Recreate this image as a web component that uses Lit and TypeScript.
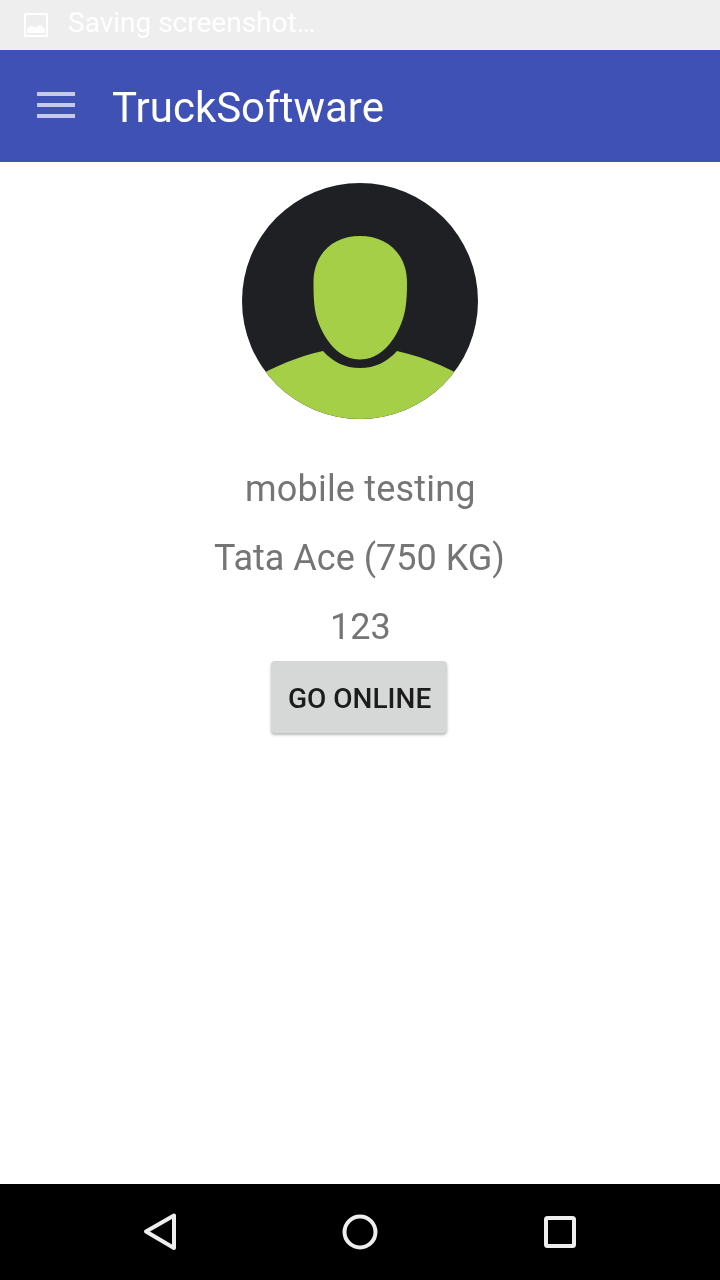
import { LitElement, html, css } from "lit";
import { customElement } from "lit/decorators.js";

@customElement("app-root")
export class AppRoot extends LitElement {
  static styles = css`
    :host { display: block; width: 720px; height: 1280px; font-family: Roboto, "Liberation Sans", sans-serif; background: #fff; }
    .page { display: flex; flex-direction: column; height: 1280px; }
    .status { height: 50px; background: #eeeeee; display: flex; align-items: center; padding-left: 24px; gap: 20px; color: #fff; font-size: 28px; flex: none; padding-bottom: 6px; box-sizing: border-box; }
    .status svg { display: block; margin-top: 6px; }
    .status span { will-change: transform; }
    .toolbar { height: 112px; background: #3f51b5; display: flex; align-items: center; flex: none; padding-left: 37px; gap: 37px; color: #fff; font-size: 42px; box-sizing: border-box; }
    .burger { width: 38px; display: flex; flex-direction: column; gap: 7px; margin-top: -2px; }
    .burger i { display: block; height: 4px; background: #c5cae9; }
    .title { line-height: 112px; padding-top: 4px; will-change: transform; }
    .content { flex: 1; display: flex; flex-direction: column; align-items: center; padding-top: 21px; box-sizing: border-box; }
    .avatar { display: block; width: 238px; height: 238px; }
    .lines { display: flex; flex-direction: column; align-items: center; margin-top: 44px; gap: 21px; color: #757575; font-size: 36px; line-height: 48px; will-change: transform; }
    .name { letter-spacing: 0.2px; }
    .truck { margin-right: 2px; }
    .btn { margin-top: 10px; margin-right: 2px; padding: 2px 0 0 1px; width: 176px; height: 72px; box-sizing: border-box; background: #d6d7d7; border-radius: 4px; box-shadow: 0 2px 3px rgba(0,0,0,.28); color: #1c1c1c; font-size: 28px; font-weight: 500; display: flex; align-items: center; justify-content: center; }
    .btn span { will-change: transform; }
    .nav { height: 96px; background: #000; flex: none; display: flex; position: relative; }
    .nav svg { display: block; width: 720px; height: 96px; }
  `;

  render() {
    return html`<div class="page">
      <div class="status">
        <svg width="24" height="24" viewBox="0 0 24 24">
          <rect x="1" y="1" width="22" height="22" fill="none" stroke="#fff" stroke-width="2"/>
          <path d="M3 20v-4c2-2.500 4-3.500 5.500-3 1.500.5 2 1.500 3 1.500 1.500 0 2.500-2.500 4.500-2.500s3 2 5 4.500v3.500z" fill="#fff"/>
        </svg>
        <span>Saving screenshot…</span>
      </div>
      <div class="toolbar">
        <div class="burger"><i></i><i></i><i></i></div>
        <div class="title">TruckSoftware</div>
      </div>
      <div class="content">
        <svg class="avatar" viewBox="0 0 238 238">
          <defs><clipPath id="c"><circle cx="119" cy="118" r="118"/></clipPath></defs>
          <circle cx="119" cy="118" r="118" fill="#1f2024"/>
          <g clip-path="url(#c)">
            <path d="M0 238V203C22 189 50 175 82 168C92 179 104 185 119 185C134 185 146 179 156 168C188 175 216 189 238 203V238Z" fill="#a4cf47"/>
          </g>
          <path d="M72.500 99C72.500 71 92 53 119 53C146 53 166 71 166 99C166 117 165 129 160 141C152 161 138 176.500 119 176.500C100 176.500 86 161 78 141C73 129 72.500 117 72.500 99Z" fill="#a4cf47"/>
        </svg>
        <div class="lines">
          <div class="name">mobile testing</div>
          <div class="truck">Tata Ace (750 KG)</div>
          <div>123</div>
        </div>
        <div class="btn"><span>GO ONLINE</span></div>
      </div>
      <div class="nav">
        <svg viewBox="0 0 720 96" fill="none" stroke="#eeeeee" stroke-width="4" stroke-linejoin="round">
          <path d="M174 31.500V64L146 47.500Z"/>
          <circle cx="360" cy="48" r="15.500"/>
          <rect x="546" y="34" width="28" height="28" rx="1.500"/>
        </svg>
      </div>
    </div>`;
  }
}
